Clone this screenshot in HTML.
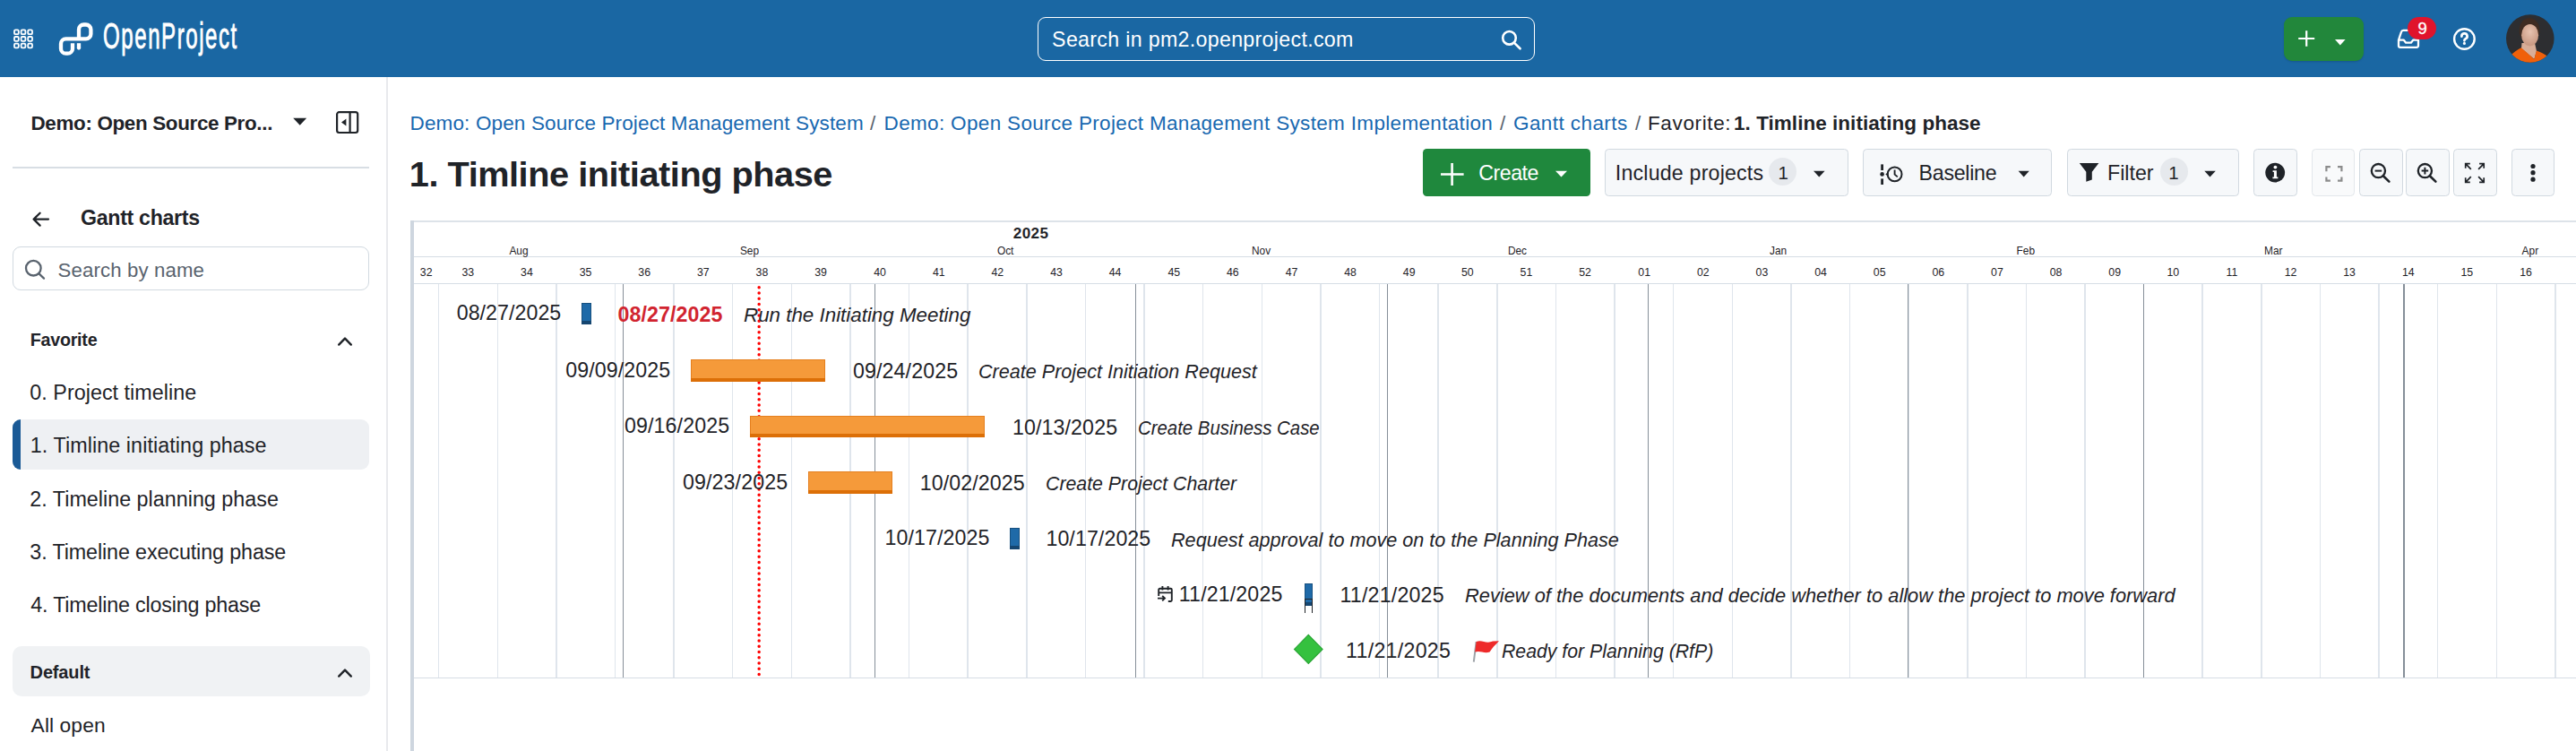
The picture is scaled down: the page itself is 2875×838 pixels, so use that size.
<!DOCTYPE html>
<html><head><meta charset="utf-8">
<style>
*{box-sizing:border-box;margin:0;padding:0}
html,body{width:2875px;height:838px;overflow:hidden;background:#fff;font-family:"Liberation Sans",sans-serif;color:#1f2328}
.a{position:absolute;white-space:pre}
</style></head><body>
<div class="a" style="left:0;top:0;width:2875px;height:86px;background:#1a67a3"></div>
<svg class="a" style="left:0;top:0" width="300" height="86">
 <g fill="none" stroke="#fff" stroke-width="1.8"><rect x="16.0" y="33.4" width="4.8" height="4.8" rx="1.3"/><rect x="16.0" y="41.0" width="4.8" height="4.8" rx="1.3"/><rect x="16.0" y="48.6" width="4.8" height="4.8" rx="1.3"/><rect x="23.6" y="33.4" width="4.8" height="4.8" rx="1.3"/><rect x="23.6" y="41.0" width="4.8" height="4.8" rx="1.3"/><rect x="23.6" y="48.6" width="4.8" height="4.8" rx="1.3"/><rect x="31.2" y="33.4" width="4.8" height="4.8" rx="1.3"/><rect x="31.2" y="41.0" width="4.8" height="4.8" rx="1.3"/><rect x="31.2" y="48.6" width="4.8" height="4.8" rx="1.3"/></g>
 <g fill="none" stroke="#fff" stroke-width="4.3">
  <path d="M81 48.2 V54.2 A5.5 5.5 0 0 1 75.5 59.7 H73.5 A5.5 5.5 0 0 1 68 54.2 V48.9 A5.5 5.5 0 0 1 73.5 43.4 H95.9 A5.5 5.5 0 0 0 101.4 37.9 V33 A5.5 5.5 0 0 0 95.9 27.5 H93.5 A5.5 5.5 0 0 0 88 33 V43.4"/>
  <path d="M88 48.2 V53.6"/><circle cx="88" cy="53.6" r="2.15" fill="#fff" stroke="none"/>
 </g>
</svg>
<div class="a" style="left:115px;top:19.3px;font-size:41.5px;line-height:41.5px;color:#fff;transform:scaleX(0.58);transform-origin:0 0;letter-spacing:2.67px;-webkit-text-stroke:0.9px #fff">OpenProject</div>
<div class="a" style="left:1157.5px;top:18.5px;width:555px;height:49px;border:1.5px solid #fff;border-radius:9px"></div>
<div class="a" style="left:1174.10px;top:33.00px;font-size:23.2px;line-height:23.2px;color:#fff;letter-spacing:0.318px">Search in pm2.openproject.com</div>
<svg class="a" style="left:1670px;top:28px" width="34" height="34"><g fill="none" stroke="#fff" stroke-width="2.6"><circle cx="14.5" cy="14.3" r="7.3"/><path d="M19.8 19.6 L26.6 26.3" stroke-linecap="round"/></g></svg>
<div class="a" style="left:2548.5px;top:18.5px;width:89px;height:49px;background:#22873b;border-radius:9px;box-shadow:0 1px 2px rgba(0,0,0,.15)"></div>
<svg class="a" style="left:2548px;top:18px" width="90" height="50"><g stroke="#fff" stroke-width="2.2"><path d="M26.2 16.2 V33.8 M17.2 25 H35.2"/></g><path d="M58 26 H69.6 L63.8 32.4 Z" fill="#fff"/></svg>
<svg class="a" style="left:2670px;top:16px" width="60" height="45"><path d="M7 28.6 L10 19.6 A2.4 2.4 0 0 1 12.3 17.9 H23.7 A2.4 2.4 0 0 1 26 19.6 L29 28.6 V35 A1.8 1.8 0 0 1 27.2 36.8 H8.8 A1.8 1.8 0 0 1 7 35 Z M7 28.6 H12.6 L15.2 31.7 H20.8 L23.4 28.6 H29" fill="none" stroke="#fff" stroke-width="2.3" stroke-linejoin="round"/></svg>
<div class="a" style="left:2687px;top:19px;width:32px;height:25px;background:#e0142c;border-radius:13px"></div>
<div class="a" style="left:2698.50px;top:23.00px;font-size:18.5px;line-height:18.5px;color:#fff;-webkit-text-stroke:0.3px #fff">9</div>
<svg class="a" style="left:2730px;top:23px" width="40" height="40"><circle cx="20.4" cy="20.5" r="11.3" fill="none" stroke="#fff" stroke-width="2.4"/><path d="M17.4 17.6 A3.1 3.1 0 1 1 21.6 20.3 C20.8 20.8 20.4 21.3 20.4 22.3" fill="none" stroke="#fff" stroke-width="2.7" stroke-linecap="round"/><circle cx="20.4" cy="25.4" r="1.55" fill="#fff"/></svg>
<svg class="a" style="left:2797px;top:16px" width="54" height="54"><defs><clipPath id="av"><circle cx="26.8" cy="27" r="26.8"/></clipPath><radialGradient id="fc" cx="0.5" cy="0.35" r="0.6"><stop offset="0" stop-color="#e8c3b0"/><stop offset="1" stop-color="#c99a84"/></radialGradient></defs>
<g clip-path="url(#av)"><rect width="54" height="54" fill="#2d2e31"/>
<ellipse cx="26" cy="18" rx="11.4" ry="14" fill="#3f2c22"/>
<path d="M17.5 32 L32 32 L34 41 L31.4 50 L17 38 Z" fill="#d8ae98"/>
<ellipse cx="26.6" cy="23.2" rx="9.5" ry="12.2" fill="url(#fc)"/>
<path d="M-2 56 L3 48 C8 42.5 13 39.5 16.9 37.3 L31.4 50.1 L33.8 40.6 C38 42 43 44.5 47 47.5 L56 56 Z" fill="#f0600a"/>
</g></svg>
<div class="a" style="left:431px;top:86px;width:1.6px;height:752px;background:#e8eaed"></div>
<div class="a" style="left:34.50px;top:127.00px;font-size:22.4px;line-height:22.4px;color:#1f2328;font-weight:bold;letter-spacing:-0.330px">Demo: Open Source Pro...</div>
<svg class="a" style="left:320px;top:120px" width="90" height="40"><path d="M7.2 11.8 H22.2 L14.7 19.8 Z" fill="#1f2328"/><g fill="none" stroke="#1f2328" stroke-width="2.2"><rect x="56.1" y="5.2" width="23.1" height="22.8" rx="2.4"/><path d="M70.6 5.2 V28"/></g><path d="M66.4 12.6 V20.6 L61 16.6 Z" fill="#1f2328"/></svg>
<div class="a" style="left:14px;top:186px;width:398px;height:1.5px;background:#d8dee4"></div>
<svg class="a" style="left:30px;top:230px" width="30" height="30"><path d="M8 14.6 H24 M14.6 7.8 L7.6 14.6 L14.6 21.6" fill="none" stroke="#1f2328" stroke-width="2.3" stroke-linecap="round" stroke-linejoin="round"/></svg>
<div class="a" style="left:90.00px;top:232.00px;font-size:23.2px;line-height:23.2px;color:#1f2328;font-weight:bold;letter-spacing:-0.318px">Gantt charts</div>
<div class="a" style="left:14px;top:275.3px;width:398px;height:49px;border:1.5px solid #d1d9e0;border-radius:9px"></div>
<svg class="a" style="left:20px;top:284px" width="36" height="34"><circle cx="17.3" cy="15.2" r="8.3" fill="none" stroke="#59636e" stroke-width="2.3"/><path d="M23.3 21.2 L29 26.6" stroke="#59636e" stroke-width="2.3" stroke-linecap="round"/></svg>
<div class="a" style="left:64.60px;top:291.00px;font-size:22.2px;line-height:22.2px;color:#59636e;letter-spacing:0.138px">Search by name</div>
<div class="a" style="left:33.80px;top:370.00px;font-size:19.7px;line-height:19.7px;color:#1f2328;font-weight:bold;letter-spacing:-0.257px">Favorite</div>
<svg class="a" style="left:370px;top:366px" width="30" height="26"><path d="M8.2 18.6 L15 11.6 L21.8 18.6" fill="none" stroke="#1f2328" stroke-width="2.4" stroke-linecap="round" stroke-linejoin="round"/></svg>
<div class="a" style="left:14px;top:468px;width:398px;height:56px;background:#eef0f3;border-radius:9px;overflow:hidden"><div style="position:absolute;left:0;top:0;width:8.5px;height:56px;background:#1a5a96"></div><div style="position:absolute;left:8.5px;top:0;width:12px;height:56px;background:#eef0f3;border-radius:7px 0 0 7px"></div></div>
<div class="a" style="left:33.30px;top:427.00px;font-size:23.3px;line-height:23.3px;color:#1f2328;letter-spacing:0.039px">0. Project timeline</div>
<div class="a" style="left:33.70px;top:486.00px;font-size:23.3px;line-height:23.3px;color:#1f2328;letter-spacing:0.088px">1. Timline initiating phase</div>
<div class="a" style="left:33.30px;top:546.00px;font-size:23.3px;line-height:23.3px;color:#1f2328;letter-spacing:0.016px">2. Timeline planning phase</div>
<div class="a" style="left:33.30px;top:605.00px;font-size:23.3px;line-height:23.3px;color:#1f2328;letter-spacing:-0.108px">3. Timeline executing phase</div>
<div class="a" style="left:34.30px;top:664.00px;font-size:23.3px;line-height:23.3px;color:#1f2328;letter-spacing:-0.200px">4. Timeline closing phase</div>
<div class="a" style="left:14px;top:721px;width:398.5px;height:56px;background:#f0f2f4;border-radius:10px"></div>
<div class="a" style="left:33.60px;top:740.00px;font-size:20px;line-height:20px;color:#1f2328;font-weight:bold;letter-spacing:-0.150px">Default</div>
<svg class="a" style="left:370px;top:738px" width="30" height="26"><path d="M8.2 16.6 L15 9.6 L21.8 16.6" fill="none" stroke="#1f2328" stroke-width="2.4" stroke-linecap="round" stroke-linejoin="round"/></svg>
<div class="a" style="left:34.60px;top:798.00px;font-size:22.8px;line-height:22.8px;color:#1f2328;letter-spacing:0.086px">All open</div>
<div class="a" style="left:457.50px;top:127.00px;font-size:22.5px;line-height:22.5px;color:#1868b0;letter-spacing:0.143px">Demo: Open Source Project Management System</div>
<div class="a" style="left:971.00px;top:127.00px;font-size:22.5px;line-height:22.5px;color:#59636e">/</div>
<div class="a" style="left:986.60px;top:127.00px;font-size:22.5px;line-height:22.5px;color:#1868b0;letter-spacing:0.333px">Demo: Open Source Project Management System Implementation</div>
<div class="a" style="left:1674.00px;top:127.00px;font-size:22.5px;line-height:22.5px;color:#59636e">/</div>
<div class="a" style="left:1689.00px;top:127.00px;font-size:22.5px;line-height:22.5px;color:#1868b0;letter-spacing:0.418px">Gantt charts</div>
<div class="a" style="left:1825.00px;top:127.00px;font-size:22.5px;line-height:22.5px;color:#59636e">/</div>
<div class="a" style="left:1839.00px;top:127.00px;font-size:22.5px;line-height:22.5px;color:#1f2328;letter-spacing:0.625px">Favorite:</div>
<div class="a" style="left:1935.00px;top:127.00px;font-size:22.5px;line-height:22.5px;color:#1f2328;font-weight:bold;letter-spacing:0.038px">1. Timline initiating phase</div>
<div class="a" style="left:456.80px;top:175.00px;font-size:39.7px;line-height:39.7px;color:#1f2328;font-weight:bold;letter-spacing:-0.454px">1. Timline initiating phase</div>
<div class="a" style="left:1588px;top:166px;width:187px;height:52.5px;background:#1f883d;border-radius:4.5px"></div>
<svg class="a" style="left:1600px;top:175px" width="40" height="40"><path d="M20.6 7 V32 M8 19.5 H33.6" stroke="#fff" stroke-width="2.6"/></svg>
<div class="a" style="left:1650.30px;top:182.00px;font-size:23.2px;line-height:23.2px;color:#fff;letter-spacing:-0.500px">Create</div>
<svg class="a" style="left:1730px;top:185px" width="30" height="20"><path d="M6 5.8 H19 L12.5 12.6 Z" fill="#fff"/></svg>
<div class="a" style="left:1791px;top:166px;width:271.5px;height:52.5px;background:#f6f8fa;border:1.5px solid #d1d9e0;border-radius:4.5px"></div>
<div class="a" style="left:1802.80px;top:182.00px;font-size:23.2px;line-height:23.2px;color:#1f2328;letter-spacing:0.193px">Include projects</div>
<div class="a" style="left:1974.3px;top:176.2px;width:31px;height:31px;border-radius:50%;background:#e6e9ed"></div>
<div class="a" style="left:1984.60px;top:183.00px;font-size:20.5px;line-height:20.5px;color:#1f2328">1</div>
<svg class="a" style="left:2018px;top:185px" width="30" height="20"><path d="M6 5.8 H18.6 L12.3 12.6 Z" fill="#1f2328"/></svg>
<div class="a" style="left:2079.2px;top:166px;width:211.1px;height:52.5px;background:#f6f8fa;border:1.5px solid #d1d9e0;border-radius:4.5px"></div>
<svg class="a" style="left:2090px;top:176px" width="40" height="36"><g fill="#1f2328"><rect x="9.2" y="7.4" width="2.8" height="6.6"/><rect x="9.2" y="23.4" width="2.8" height="6.6"/><circle cx="10.6" cy="18.4" r="2.3"/></g>
<path d="M14.3 18.4 L17.5 15.8 L17.5 21 Z" fill="#1f2328"/><circle cx="24.6" cy="18.4" r="7.9" fill="none" stroke="#1f2328" stroke-width="2"/><path d="M24.6 13.4 V18.6 L27.8 21.4" fill="none" stroke="#1f2328" stroke-width="1.9"/></svg>
<div class="a" style="left:2141.60px;top:182.00px;font-size:23.2px;line-height:23.2px;color:#1f2328;letter-spacing:-0.271px">Baseline</div>
<svg class="a" style="left:2246px;top:185px" width="30" height="20"><path d="M6.6 5.8 H18.8 L12.7 12.6 Z" fill="#1f2328"/></svg>
<div class="a" style="left:2307.4px;top:166px;width:191.2px;height:52.5px;background:#f6f8fa;border:1.5px solid #d1d9e0;border-radius:4.5px"></div>
<svg class="a" style="left:2316px;top:178px" width="32" height="30"><path d="M4.8 3.9 H26.4 L18.8 13.7 V22.6 L12.3 24.8 V13.7 Z" fill="#1f2328"/></svg>
<div class="a" style="left:2352.10px;top:182.00px;font-size:23.2px;line-height:23.2px;color:#1f2328;letter-spacing:-0.020px">Filter</div>
<div class="a" style="left:2410.8px;top:176.2px;width:31px;height:31px;border-radius:50%;background:#e6e9ed"></div>
<div class="a" style="left:2420.30px;top:183.00px;font-size:20.5px;line-height:20.5px;color:#1f2328">1</div>
<svg class="a" style="left:2454px;top:185px" width="30" height="20"><path d="M6.3 5.8 H18.8 L12.5 12.6 Z" fill="#1f2328"/></svg>
<div class="a" style="left:2515.4px;top:166px;width:48.3px;height:52.5px;background:#f6f8fa;border:1.5px solid #d1d9e0;border-radius:4.5px"></div>
<svg class="a" style="left:2524px;top:177px" width="32" height="32"><circle cx="15.2" cy="15.6" r="10.9" fill="#1f2328"/><circle cx="15.4" cy="9.6" r="1.9" fill="#fff"/><path d="M12.6 13.2 H16.9 V20.4 H18.4 V22.2 H12.4 V20.4 H13.9 V15 H12.6 Z" fill="#fff"/></svg>
<div class="a" style="left:2580.4px;top:166px;width:48.1px;height:52.5px;background:#f9fafb;border:1.5px solid #e3e7eb;border-radius:4.5px"></div>
<svg class="a" style="left:2590px;top:180px" width="30" height="30"><path d="M6.4 11.3 V6.2 H10.9 M19 6.2 H23.4 V11.3 M23.4 17.4 V21.6 H19 M10.9 21.6 H6.4 V17.4" fill="none" stroke="#8c8c8c" stroke-width="2.2"/></svg>
<div class="a" style="left:2633px;top:166px;width:48.5px;height:52.5px;background:#f6f8fa;border:1.5px solid #d1d9e0;border-radius:4.5px"></div>
<svg class="a" style="left:2640px;top:178px" width="34" height="34"><circle cx="14.4" cy="12.6" r="7.6" fill="none" stroke="#1f2328" stroke-width="2.3"/><path d="M19.8 18.2 L26.4 24.6" stroke="#1f2328" stroke-width="2.6" stroke-linecap="round"/><path d="M10.6 12.6 H18.2" stroke="#1f2328" stroke-width="2"/></svg>
<div class="a" style="left:2685.3px;top:166px;width:48.5px;height:52.5px;background:#f6f8fa;border:1.5px solid #d1d9e0;border-radius:4.5px"></div>
<svg class="a" style="left:2692px;top:178px" width="34" height="34"><circle cx="14.4" cy="12.6" r="7.6" fill="none" stroke="#1f2328" stroke-width="2.3"/><path d="M19.8 18.2 L26.4 24.6" stroke="#1f2328" stroke-width="2.6" stroke-linecap="round"/><path d="M10.6 12.6 H18.2 M14.4 8.8 V16.4" stroke="#1f2328" stroke-width="2"/></svg>
<div class="a" style="left:2738px;top:166px;width:48.5px;height:52.5px;background:#f6f8fa;border:1.5px solid #d1d9e0;border-radius:4.5px"></div>
<svg class="a" style="left:2745px;top:177px" width="34" height="34"><g fill="none" stroke="#1f2328" stroke-width="1.7"><path d="M6.7 5.7 L12.8 11.8 M6.7 10.8 V5.7 H11.8 M27.2 5.7 L21.1 11.8 M22.1 5.7 H27.2 V10.8 M6.7 26.3 L12.8 20.2 M6.7 21.2 V26.3 H11.8 M27.2 26.3 L21.1 20.2 M22.1 26.3 H27.2 V21.2"/></g></svg>
<div class="a" style="left:2803px;top:166px;width:48.4px;height:52.5px;background:#f6f8fa;border:1.5px solid #d1d9e0;border-radius:4.5px"></div>
<svg class="a" style="left:2817px;top:177px" width="20" height="32"><g fill="#1f2328"><circle cx="10" cy="8.5" r="2.6"/><circle cx="10" cy="15.7" r="2.6"/><circle cx="10" cy="23.2" r="2.6"/></g></svg>
<div class="a" style="left:457.8px;top:246px;width:4.2px;height:592px;background:#ced6df"></div>
<div class="a" style="left:462px;top:246.2px;width:2413px;height:1.7px;background:#dde3e9"></div>
<div class="a" style="left:462px;top:285.5px;width:2413px;height:1.5px;background:#d6dde5"></div>
<div class="a" style="left:462px;top:315.9px;width:2413px;height:1.5px;background:#d6dde5"></div>
<div class="a" style="left:462px;top:755.6px;width:2413px;height:1.5px;background:#d6dde5"></div>
<div class="a" style="left:488.89px;top:317px;width:1.5px;height:439px;background:#dfe5ec"></div>
<div class="a" style="left:554.51px;top:317px;width:1.5px;height:439px;background:#dfe5ec"></div>
<div class="a" style="left:620.13px;top:317px;width:1.5px;height:439px;background:#dfe5ec"></div>
<div class="a" style="left:685.75px;top:317px;width:1.5px;height:439px;background:#dfe5ec"></div>
<div class="a" style="left:751.37px;top:317px;width:1.5px;height:439px;background:#dfe5ec"></div>
<div class="a" style="left:816.99px;top:317px;width:1.5px;height:439px;background:#dfe5ec"></div>
<div class="a" style="left:882.61px;top:317px;width:1.5px;height:439px;background:#dfe5ec"></div>
<div class="a" style="left:948.23px;top:317px;width:1.5px;height:439px;background:#dfe5ec"></div>
<div class="a" style="left:1013.85px;top:317px;width:1.5px;height:439px;background:#dfe5ec"></div>
<div class="a" style="left:1079.47px;top:317px;width:1.5px;height:439px;background:#dfe5ec"></div>
<div class="a" style="left:1145.09px;top:317px;width:1.5px;height:439px;background:#dfe5ec"></div>
<div class="a" style="left:1210.71px;top:317px;width:1.5px;height:439px;background:#dfe5ec"></div>
<div class="a" style="left:1276.33px;top:317px;width:1.5px;height:439px;background:#dfe5ec"></div>
<div class="a" style="left:1341.95px;top:317px;width:1.5px;height:439px;background:#dfe5ec"></div>
<div class="a" style="left:1407.57px;top:317px;width:1.5px;height:439px;background:#dfe5ec"></div>
<div class="a" style="left:1473.19px;top:317px;width:1.5px;height:439px;background:#dfe5ec"></div>
<div class="a" style="left:1538.81px;top:317px;width:1.5px;height:439px;background:#dfe5ec"></div>
<div class="a" style="left:1604.43px;top:317px;width:1.5px;height:439px;background:#dfe5ec"></div>
<div class="a" style="left:1670.05px;top:317px;width:1.5px;height:439px;background:#dfe5ec"></div>
<div class="a" style="left:1735.67px;top:317px;width:1.5px;height:439px;background:#dfe5ec"></div>
<div class="a" style="left:1801.29px;top:317px;width:1.5px;height:439px;background:#dfe5ec"></div>
<div class="a" style="left:1866.91px;top:317px;width:1.5px;height:439px;background:#dfe5ec"></div>
<div class="a" style="left:1932.53px;top:317px;width:1.5px;height:439px;background:#dfe5ec"></div>
<div class="a" style="left:1998.15px;top:317px;width:1.5px;height:439px;background:#dfe5ec"></div>
<div class="a" style="left:2063.77px;top:317px;width:1.5px;height:439px;background:#dfe5ec"></div>
<div class="a" style="left:2129.39px;top:317px;width:1.5px;height:439px;background:#dfe5ec"></div>
<div class="a" style="left:2195.01px;top:317px;width:1.5px;height:439px;background:#dfe5ec"></div>
<div class="a" style="left:2260.63px;top:317px;width:1.5px;height:439px;background:#dfe5ec"></div>
<div class="a" style="left:2326.25px;top:317px;width:1.5px;height:439px;background:#dfe5ec"></div>
<div class="a" style="left:2391.87px;top:317px;width:1.5px;height:439px;background:#dfe5ec"></div>
<div class="a" style="left:2457.49px;top:317px;width:1.5px;height:439px;background:#dfe5ec"></div>
<div class="a" style="left:2523.11px;top:317px;width:1.5px;height:439px;background:#dfe5ec"></div>
<div class="a" style="left:2588.73px;top:317px;width:1.5px;height:439px;background:#dfe5ec"></div>
<div class="a" style="left:2654.35px;top:317px;width:1.5px;height:439px;background:#dfe5ec"></div>
<div class="a" style="left:2719.97px;top:317px;width:1.5px;height:439px;background:#dfe5ec"></div>
<div class="a" style="left:2785.59px;top:317px;width:1.5px;height:439px;background:#dfe5ec"></div>
<div class="a" style="left:2851.21px;top:317px;width:1.5px;height:439px;background:#dfe5ec"></div>
<div class="a" style="left:694.90px;top:317px;width:1.2px;height:439px;background:#868f99"></div>
<div class="a" style="left:976.10px;top:317px;width:1.2px;height:439px;background:#868f99"></div>
<div class="a" style="left:1266.80px;top:317px;width:1.2px;height:439px;background:#868f99"></div>
<div class="a" style="left:1548.00px;top:317px;width:1.2px;height:439px;background:#868f99"></div>
<div class="a" style="left:1838.60px;top:317px;width:1.2px;height:439px;background:#868f99"></div>
<div class="a" style="left:2129.20px;top:317px;width:1.2px;height:439px;background:#868f99"></div>
<div class="a" style="left:2391.70px;top:317px;width:1.2px;height:439px;background:#868f99"></div>
<div class="a" style="left:2682.40px;top:317px;width:1.2px;height:439px;background:#868f99"></div>
<div class="a" style="left:1130.80px;top:252.00px;font-size:17.1px;line-height:17.1px;color:#1f2328;font-weight:bold;letter-spacing:0.367px">2025</div>
<div class="a" style="left:568.40px;top:275.00px;font-size:11.9px;line-height:11.9px;color:#1f2328">Aug</div>
<div class="a" style="left:825.90px;top:275.00px;font-size:11.9px;line-height:11.9px;color:#1f2328">Sep</div>
<div class="a" style="left:1112.90px;top:275.00px;font-size:11.9px;line-height:11.9px;color:#1f2328">Oct</div>
<div class="a" style="left:1397.00px;top:275.00px;font-size:11.9px;line-height:11.9px;color:#1f2328">Nov</div>
<div class="a" style="left:1682.90px;top:275.00px;font-size:11.9px;line-height:11.9px;color:#1f2328">Dec</div>
<div class="a" style="left:1975.00px;top:275.00px;font-size:11.9px;line-height:11.9px;color:#1f2328">Jan</div>
<div class="a" style="left:2250.50px;top:275.00px;font-size:11.9px;line-height:11.9px;color:#1f2328">Feb</div>
<div class="a" style="left:2527.10px;top:275.00px;font-size:11.9px;line-height:11.9px;color:#1f2328">Mar</div>
<div class="a" style="left:2814.60px;top:275.00px;font-size:11.9px;line-height:11.9px;color:#1f2328">Apr</div>
<div class="a" style="left:468.82px;top:298.00px;font-size:12.3px;line-height:12.3px;color:#1f2328">32</div>
<div class="a" style="left:515.45px;top:298.00px;font-size:12.3px;line-height:12.3px;color:#1f2328">33</div>
<div class="a" style="left:581.07px;top:298.00px;font-size:12.3px;line-height:12.3px;color:#1f2328">34</div>
<div class="a" style="left:646.69px;top:298.00px;font-size:12.3px;line-height:12.3px;color:#1f2328">35</div>
<div class="a" style="left:712.31px;top:298.00px;font-size:12.3px;line-height:12.3px;color:#1f2328">36</div>
<div class="a" style="left:777.93px;top:298.00px;font-size:12.3px;line-height:12.3px;color:#1f2328">37</div>
<div class="a" style="left:843.55px;top:298.00px;font-size:12.3px;line-height:12.3px;color:#1f2328">38</div>
<div class="a" style="left:909.17px;top:298.00px;font-size:12.3px;line-height:12.3px;color:#1f2328">39</div>
<div class="a" style="left:975.29px;top:298.00px;font-size:12.3px;line-height:12.3px;color:#1f2328">40</div>
<div class="a" style="left:1040.91px;top:298.00px;font-size:12.3px;line-height:12.3px;color:#1f2328">41</div>
<div class="a" style="left:1106.53px;top:298.00px;font-size:12.3px;line-height:12.3px;color:#1f2328">42</div>
<div class="a" style="left:1172.15px;top:298.00px;font-size:12.3px;line-height:12.3px;color:#1f2328">43</div>
<div class="a" style="left:1237.77px;top:298.00px;font-size:12.3px;line-height:12.3px;color:#1f2328">44</div>
<div class="a" style="left:1303.39px;top:298.00px;font-size:12.3px;line-height:12.3px;color:#1f2328">45</div>
<div class="a" style="left:1369.01px;top:298.00px;font-size:12.3px;line-height:12.3px;color:#1f2328">46</div>
<div class="a" style="left:1434.63px;top:298.00px;font-size:12.3px;line-height:12.3px;color:#1f2328">47</div>
<div class="a" style="left:1500.25px;top:298.00px;font-size:12.3px;line-height:12.3px;color:#1f2328">48</div>
<div class="a" style="left:1565.87px;top:298.00px;font-size:12.3px;line-height:12.3px;color:#1f2328">49</div>
<div class="a" style="left:1630.99px;top:298.00px;font-size:12.3px;line-height:12.3px;color:#1f2328">50</div>
<div class="a" style="left:1696.61px;top:298.00px;font-size:12.3px;line-height:12.3px;color:#1f2328">51</div>
<div class="a" style="left:1762.23px;top:298.00px;font-size:12.3px;line-height:12.3px;color:#1f2328">52</div>
<div class="a" style="left:1828.35px;top:298.00px;font-size:12.3px;line-height:12.3px;color:#1f2328">01</div>
<div class="a" style="left:1893.97px;top:298.00px;font-size:12.3px;line-height:12.3px;color:#1f2328">02</div>
<div class="a" style="left:1959.59px;top:298.00px;font-size:12.3px;line-height:12.3px;color:#1f2328">03</div>
<div class="a" style="left:2025.21px;top:298.00px;font-size:12.3px;line-height:12.3px;color:#1f2328">04</div>
<div class="a" style="left:2090.83px;top:298.00px;font-size:12.3px;line-height:12.3px;color:#1f2328">05</div>
<div class="a" style="left:2156.45px;top:298.00px;font-size:12.3px;line-height:12.3px;color:#1f2328">06</div>
<div class="a" style="left:2222.07px;top:298.00px;font-size:12.3px;line-height:12.3px;color:#1f2328">07</div>
<div class="a" style="left:2287.69px;top:298.00px;font-size:12.3px;line-height:12.3px;color:#1f2328">08</div>
<div class="a" style="left:2353.31px;top:298.00px;font-size:12.3px;line-height:12.3px;color:#1f2328">09</div>
<div class="a" style="left:2418.43px;top:298.00px;font-size:12.3px;line-height:12.3px;color:#1f2328">10</div>
<div class="a" style="left:2484.55px;top:298.00px;font-size:12.3px;line-height:12.3px;color:#1f2328">11</div>
<div class="a" style="left:2549.67px;top:298.00px;font-size:12.3px;line-height:12.3px;color:#1f2328">12</div>
<div class="a" style="left:2615.29px;top:298.00px;font-size:12.3px;line-height:12.3px;color:#1f2328">13</div>
<div class="a" style="left:2680.91px;top:298.00px;font-size:12.3px;line-height:12.3px;color:#1f2328">14</div>
<div class="a" style="left:2746.53px;top:298.00px;font-size:12.3px;line-height:12.3px;color:#1f2328">15</div>
<div class="a" style="left:2812.15px;top:298.00px;font-size:12.3px;line-height:12.3px;color:#1f2328">16</div>
<svg class="a" style="left:840px;top:316px" width="14" height="442"><path d="M7.15 4.65 V440" stroke="#ff0000" stroke-width="3.5" stroke-linecap="round" stroke-dasharray="0 6.26"/></svg>
<div class="a" style="left:509.70px;top:338.00px;font-size:23.2px;line-height:23.2px;color:#1f2328;letter-spacing:0.056px">08/27/2025</div>
<div class="a" style="left:649.10px;top:337.80px;width:10.70px;height:24.00px;background:#1f6aa8;border:1px solid #17507f"><div style="position:absolute;left:-1px;right:-1px;bottom:-1px;height:3.6px;background:#164670"></div></div>
<div class="a" style="left:689.50px;top:340.00px;font-size:23.2px;line-height:23.2px;color:#d1242f;font-weight:bold;letter-spacing:0.089px">08/27/2025</div>
<div class="a" style="left:830.21px;top:341.00px;font-size:22.5px;line-height:22.5px;color:#1f2328;font-style:italic;transform:scaleX(0.9933);transform-origin:0 0">Run the Initiating Meeting</div>
<div class="a" style="left:631.30px;top:402.00px;font-size:23.2px;line-height:23.2px;color:#1f2328;letter-spacing:0.078px">09/09/2025</div>
<div class="a" style="left:770.90px;top:401.00px;width:150.10px;height:24.50px;background:#f59a3a;border:1px solid #e5801f"><div style="position:absolute;left:-1px;right:-1px;bottom:-1px;height:4.0px;background:#dc6f07"></div></div>
<div class="a" style="left:952.00px;top:403.00px;font-size:23.2px;line-height:23.2px;color:#1f2328;letter-spacing:0.111px">09/24/2025</div>
<div class="a" style="left:1092.24px;top:404.00px;font-size:22.5px;line-height:22.5px;color:#1f2328;font-style:italic;transform:scaleX(0.9593);transform-origin:0 0">Create Project Initiation Request</div>
<div class="a" style="left:697.00px;top:464.00px;font-size:23.2px;line-height:23.2px;color:#1f2328;letter-spacing:0.111px">09/16/2025</div>
<div class="a" style="left:837.00px;top:464.00px;width:262.00px;height:23.50px;background:#f59a3a;border:1px solid #e5801f"><div style="position:absolute;left:-1px;right:-1px;bottom:-1px;height:4.0px;background:#dc6f07"></div></div>
<div class="a" style="left:1129.90px;top:466.00px;font-size:23.2px;line-height:23.2px;color:#1f2328;letter-spacing:0.122px">10/13/2025</div>
<div class="a" style="left:1270.09px;top:467.00px;font-size:22.5px;line-height:22.5px;color:#1f2328;font-style:italic;transform:scaleX(0.9054);transform-origin:0 0">Create Business Case</div>
<div class="a" style="left:762.00px;top:527.00px;font-size:23.2px;line-height:23.2px;color:#1f2328;letter-spacing:0.111px">09/23/2025</div>
<div class="a" style="left:902.40px;top:526.30px;width:93.50px;height:24.50px;background:#f59a3a;border:1px solid #e5801f"><div style="position:absolute;left:-1px;right:-1px;bottom:-1px;height:4.0px;background:#dc6f07"></div></div>
<div class="a" style="left:1026.80px;top:528.00px;font-size:23.2px;line-height:23.2px;color:#1f2328;letter-spacing:0.100px">10/02/2025</div>
<div class="a" style="left:1167.05px;top:529.00px;font-size:22.5px;line-height:22.5px;color:#1f2328;font-style:italic;transform:scaleX(0.9467);transform-origin:0 0">Create Project Charter</div>
<div class="a" style="left:987.60px;top:589.00px;font-size:23.2px;line-height:23.2px;color:#1f2328;letter-spacing:0.089px">10/17/2025</div>
<div class="a" style="left:1127.40px;top:589.00px;width:10.30px;height:23.70px;background:#1f6aa8;border:1px solid #17507f"><div style="position:absolute;left:-1px;right:-1px;bottom:-1px;height:3.6px;background:#164670"></div></div>
<div class="a" style="left:1167.40px;top:590.00px;font-size:23.2px;line-height:23.2px;color:#1f2328;letter-spacing:0.089px">10/17/2025</div>
<div class="a" style="left:1307.44px;top:592.00px;font-size:22.5px;line-height:22.5px;color:#1f2328;font-style:italic;transform:scaleX(0.9605);transform-origin:0 0">Request approval to move on to the Planning Phase</div>
<svg class="a" style="left:1288px;top:650px" width="26" height="26"><g fill="none" stroke="#1f2328" stroke-width="1.9"><path d="M5.2 15 V8 A1.2 1.2 0 0 1 6.4 6.8 H18.6 A1.2 1.2 0 0 1 19.8 8 V19.8 A1.2 1.2 0 0 1 18.6 21 H15.8 M5.2 11.4 H19.8 M9.4 4 V8.6 M15.6 4 V8.6 M4 17.6 H12 M9.2 14.8 L12 17.6 L9.2 20.4"/></g></svg>
<div class="a" style="left:1315.80px;top:652.00px;font-size:23.2px;line-height:23.2px;color:#1f2328;letter-spacing:0.133px">11/21/2025</div>
<div class="a" style="left:1455.80px;top:651.20px;width:9.00px;height:24.60px;background:#1f6aa8;border:1px solid #17507f"><div style="position:absolute;left:-1px;right:-1px;bottom:-1px;height:3.6px;background:#164670"></div></div>
<div class="a" style="left:1455.8px;top:668px;width:9.2px;height:15.8px;border:1.3px solid #1f2328;border-bottom:none"></div>
<div class="a" style="left:1495.50px;top:653.00px;font-size:23.2px;line-height:23.2px;color:#1f2328;letter-spacing:0.189px">11/21/2025</div>
<div class="a" style="left:1635.43px;top:654.00px;font-size:22.5px;line-height:22.5px;color:#1f2328;font-style:italic;transform:scaleX(0.9706);transform-origin:0 0">Review of the documents and decide whether to allow the project to move forward</div>
<svg class="a" style="left:1440px;top:704px" width="42" height="42"><path d="M20.3 4.3 L36.1 20.4 L20.3 36.5 L4.5 20.4 Z" fill="#35c13f" stroke="#27a333" stroke-width="1.1"/></svg>
<div class="a" style="left:1502.00px;top:715.00px;font-size:23.2px;line-height:23.2px;color:#1f2328;letter-spacing:0.289px">11/21/2025</div>
<svg class="a" style="left:1640px;top:710px" width="40" height="34"><path d="M7.6 6 L4.8 28.6" stroke="#9ea3a8" stroke-width="2"/><path d="M7.6 6 C14 3 18 9 26 5.6 L33 5.2 C29 9.6 25 13 22.6 17.6 C16 19.6 12 15.6 6.2 17.6 Z" fill="#ee2a2a"/></svg>
<div class="a" style="left:1675.86px;top:716.00px;font-size:22.5px;line-height:22.5px;color:#1f2328;font-style:italic;transform:scaleX(0.9444);transform-origin:0 0">Ready for Planning (RfP)</div>
</body></html>
